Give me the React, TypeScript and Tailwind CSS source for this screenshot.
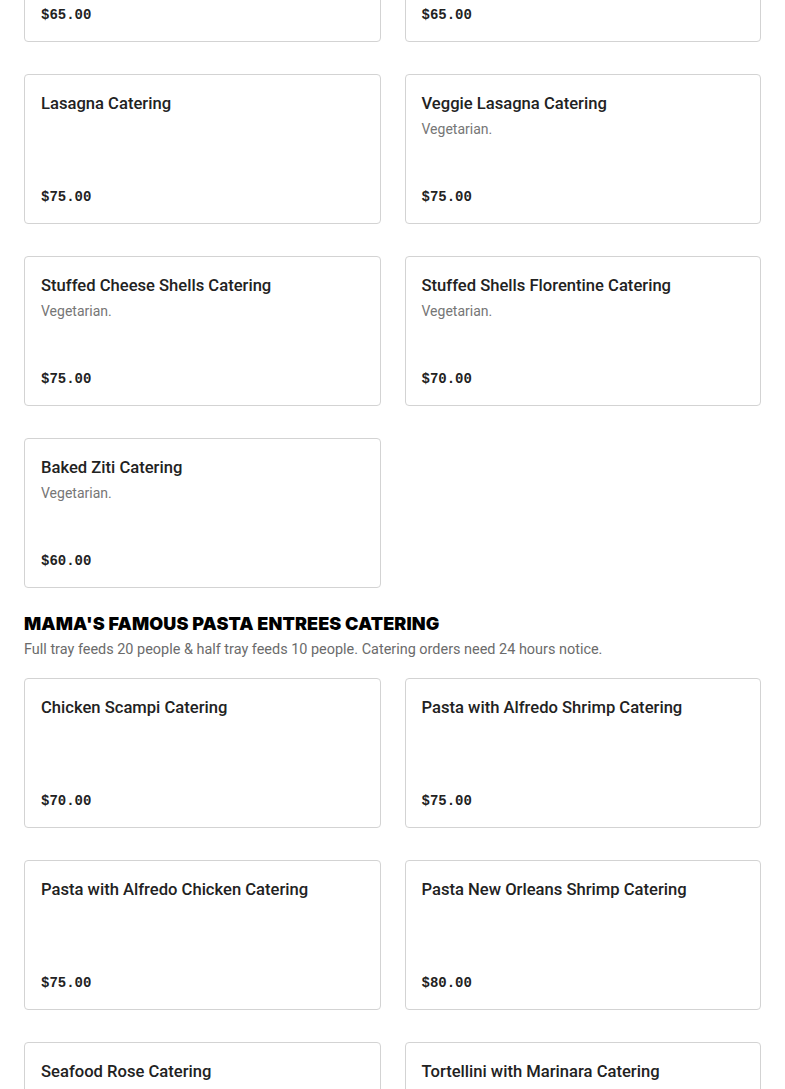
import React from 'react'

interface Item {
  name: string
  note?: string
  price: string
}

const PASTA_CATERING: Item[] = [
  { name: 'Spaghetti Catering', price: '$65.00' },
  { name: 'Penne Catering', price: '$65.00' },
  { name: 'Lasagna Catering', price: '$75.00' },
  { name: 'Veggie Lasagna Catering', note: 'Vegetarian.', price: '$75.00' },
  { name: 'Stuffed Cheese Shells Catering', note: 'Vegetarian.', price: '$75.00' },
  { name: 'Stuffed Shells Florentine Catering', note: 'Vegetarian.', price: '$70.00' },
  { name: 'Baked Ziti Catering', note: 'Vegetarian.', price: '$60.00' },
]

const ENTREES_CATERING: Item[] = [
  { name: 'Chicken Scampi Catering', price: '$70.00' },
  { name: 'Pasta with Alfredo Shrimp Catering', price: '$75.00' },
  { name: 'Pasta with Alfredo Chicken Catering', price: '$75.00' },
  { name: 'Pasta New Orleans Shrimp Catering', price: '$80.00' },
  { name: 'Seafood Rose Catering', price: '$75.00' },
  { name: 'Tortellini with Marinara Catering', price: '$75.00' },
]

function MenuCard({ item }: { item: Item }) {
  return (
    <div className="h-[150px] border border-[#d3d3d3] rounded-[4px] bg-white px-4 pt-[17px] pb-4 flex flex-col justify-between">
      <div>
        <h3 className="text-[16.6px] leading-6 font-medium text-[#222]">{item.name}</h3>
        {item.note && <p className="text-[14px] leading-[20px] mt-[3px] text-[#767676]">{item.note}</p>}
      </div>
      <p className="text-[14px] leading-5 font-bold text-[#222] font-['Liberation_Mono',monospace]">{item.price}</p>
    </div>
  )
}

export default function App() {
  return (
    <div className="min-h-screen bg-white font-['Roboto',sans-serif] px-6 overflow-hidden">
      {/* pasta catering, scrolled so the first row is cut off */}
      <div className="grid grid-cols-2 gap-x-6 gap-y-8 -mt-[108px]">
        {PASTA_CATERING.map((item, i) => (
          <MenuCard key={i} item={item} />
        ))}
      </div>

      {/* entrees */}
      <h2 className="mt-[22px] text-[18px] leading-7 font-black uppercase tracking-[0.1px] text-black font-['Inter',sans-serif]">
        Mama's Famous Pasta Entrees Catering
      </h2>
      <p className="mt-[2px] text-[14.45px] leading-5 text-[#6b6b6b]">
        Full tray feeds 20 people &amp; half tray feeds 10 people. Catering orders need 24 hours notice.
      </p>
      <div className="grid grid-cols-2 gap-x-6 gap-y-8 mt-[18px] pb-10">
        {ENTREES_CATERING.map((item, i) => (
          <MenuCard key={i} item={item} />
        ))}
      </div>
    </div>
  )
}
